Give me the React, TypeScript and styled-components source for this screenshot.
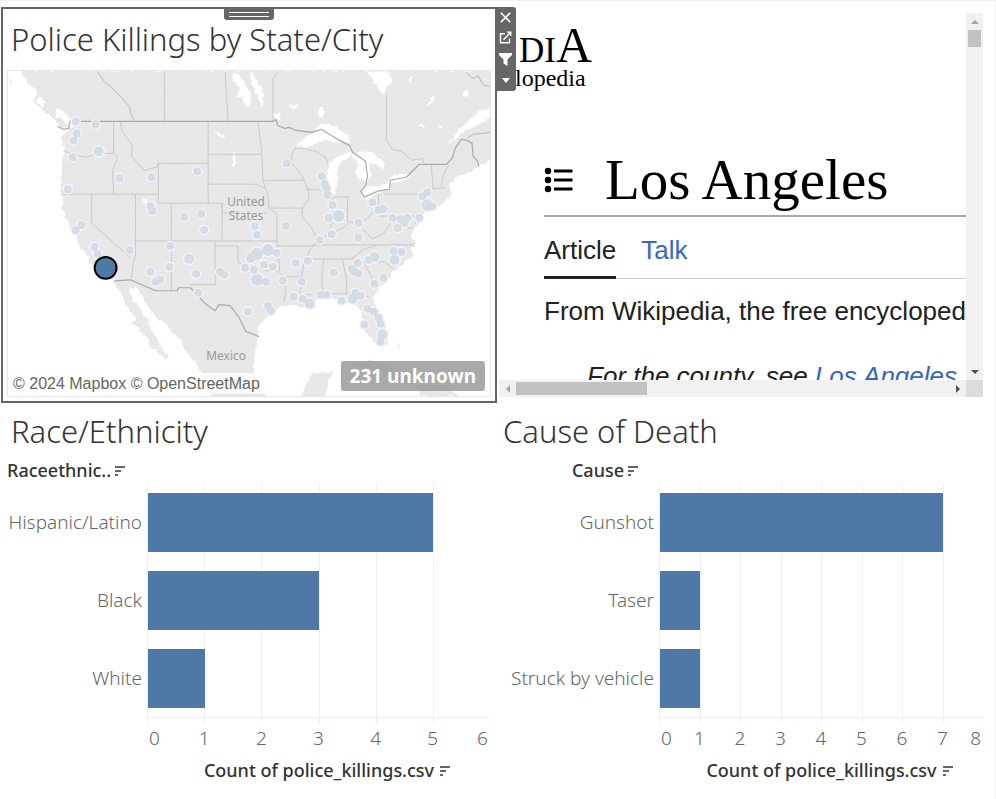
import React from "react";
import styled, { createGlobalStyle } from "styled-components";

const GlobalStyle = createGlobalStyle`
  * { box-sizing: border-box; }
  body { margin: 0; background: #fff; }
  button { border: 0; padding: 0; background: none; font: inherit; color: inherit; }
`;

const sans = `"Noto Sans", "Open Sans", sans-serif`;

const Dashboard = styled.main`
  min-height: 100vh;
  border-top: 1px solid #f1f1f1;
  border-right: 1px solid #f1f1f1;
  display: grid;
  grid-template-columns: minmax(0, 1fr) minmax(0, 1fr);
  grid-template-rows: auto 1fr;
  column-gap: 1px;
  font-family: ${sans};
  color: #333;
`;

const Title = styled.h2`
  margin: 0;
  font-size: 31px;
  line-height: 40px;
  font-weight: 300;
  color: #333;
  white-space: nowrap;
`;

/* ---------- map zone ---------- */

const MapZone = styled.section`
  position: relative;
  margin: 6px 0 0 1px;
  border: 2px solid #666;
  padding: 0 4px 4px;
`;

const MapTitle = styled(Title)`
  padding: 10px 0 11px 4px;
`;

const DragHandle = styled.button`
  position: absolute;
  top: -2px;
  left: 50%;
  margin-left: -25px;
  width: 50px;
  height: 13px;
  padding: 5px 5px 3px;
  border-radius: 0 0 3px 3px;
  background: #666;
  display: flex;
  flex-direction: column;
  justify-content: space-between;
`;

const Grip = styled.span`
  width: 100%;
  height: 1px;
  background: #fff;
`;

const ZoneToolbar = styled.div`
  position: absolute;
  z-index: 2;
  top: -2px;
  left: 100%;
  width: 21px;
  height: 84px;
  border-radius: 0 3px 3px 0;
  background: #666;
  display: grid;
  grid-template-rows: 20px 20px 24px 18px;
  place-items: center;
`;

const ToolButton = styled.button`
  display: grid;
  place-items: center;
  color: #fff;
`;

const MapFrame = styled.div`
  position: relative;
  border: 1px solid #e6e6e6;
  aspect-ratio: 484 / 327;
  overflow: hidden;

  > svg { display: block; width: 100%; height: 100%; }
`;

const Attribution = styled.div`
  position: absolute;
  left: 2px;
  bottom: 2px;
  padding: 0 3px;
  background: rgba(255, 255, 255, 0.75);
  font: 16px/21px "Liberation Sans", Arial, sans-serif;
  color: #666;
`;

const UnknownBadge = styled.button`
  position: absolute;
  right: 5px;
  bottom: 5px;
  padding: 0 9px;
  border-radius: 3px;
  background: rgba(150, 150, 150, 0.82);
  color: #fff;
  font: 700 19px/30px ${sans};
`;

const LAND =
  "M19 70 L25 77 L28 84 L34 88 L36 94 L32 101 L38 106 L46 113 L53 118 L57 124 L60 127 L68 128 L61 137 L63 148 L62 156 L60 176 L60 190 L62 200 L61 209 L66 219 L69 228 L77 239 L79 247 L87 256 L89 263 L100 267 L108 276 L113 281 L116 287 L122 295 L124 303 L131 312 L136 321 L130 323 L138 328 L141 334 L147 337 L149 346 L157 352 L165 360 L169 357 L161 349 L157 339 L150 330 L148 320 L142 315 L140 309 L132 300 L129 289 L135 287 L141 293 L144 301 L149 308 L156 319 L165 323 L173 334 L180 340 L182 347 L190 358 L196 363 L200 372 L204 382 L212 398 L270 398 L262 393 L256 386 L254 375 L254 358 L257 343 L258 328 L265 319 L272 312 L282 307 L292 305 L299 307 L307 308 L312 310 L316 307 L313 301 L322 299 L335 299 L345 303 L353 304 L360 309 L363 315 L364 326 L369 335 L375 343 L381 347 L388 345 L388 334 L386 323 L381 314 L374 303 L374 296 L381 288 L389 280 L394 272 L405 262 L414 256 L411 250 L416 244 L412 235 L415 229 L420 224 L422 216 L428 211 L439 207 L447 200 L452 196 L451 185 L457 178 L463 175 L470 172 L479 166 L492 160 L492 70 Z";

const WATER = [
  "M57 107 L65 113 L70 119 L71 127 L67 126 L63 119 L55 115 Z",
  "M38 96 L44 102 L42 106 L35 101 Z",
  "M297 145 L303 138 L313 133 L321 123 L332 124 L339 128 L348 134 L350 143 L341 141 L333 143 L326 139 L318 141 L311 146 L303 147 Z",
  "M328 170 L331 161 L338 156 L350 152 L354 154 L344 160 L338 168 L338 181 L335 194 L330 193 L328 181 Z",
  "M353 154 L363 151 L373 152 L380 158 L385 164 L384 169 L377 164 L370 163 L371 174 L368 182 L361 178 L360 181 L356 171 L360 164 L354 158 Z",
  "M361 195 L366 186 L379 186 L392 181 L391 189 L379 192 L367 200 Z",
  "M389 180 L394 175 L408 173 L411 177 L403 181 L392 183 Z",
  "M232 72 L239 73 L244 83 L250 92 L251 103 L246 107 L243 97 L237 96 L239 87 L232 78 Z",
  "M250 71 L255 76 L260 86 L264 94 L263 105 L260 103 L258 94 L251 84 Z",
  "M367 71 L389 71 L394 80 L388 86 L384 95 L380 90 L376 82 Z",
  "M408 78 L414 76 L411 82 Z",
  "M427 104 L432 98 L436 94 L434 101 L429 105 Z",
  "M463 92 L470 88 L468 96 L464 97 Z",
  "M317 111 L322 106 L325 112 L322 117 L317 115 Z",
  "M273 113 L280 112 L281 119 L275 121 Z",
  "M288 103 L292 106 L299 103 L296 108 L290 108 Z",
  "M417 126 L422 123 L427 127 Z",
  "M439 124 L444 126 L441 128 Z",
  "M450 143 L457 132 L469 121 L479 112 L492 105 L492 117 L483 122 L472 128 L462 133 L454 141 Z",
  "M213 130 L220 133 L226 137 L222 138 Z",
  "M233 151 L236 156 L235 165 L232 167 Z",
  "M141 198 L149 200 L150 206 L144 203 Z",
];

const ISLANDS = [
  "M302 398 L308 382 L312 374 L333 372 L329 380 L326 398 Z",
  "M350 366 L370 360 L385 364 L400 374 L416 382 L404 386 L390 379 L374 369 L356 368 Z",
  "M420 389 L446 386 L460 397 L420 397 Z",
  "M397 344 L400 346 L399 351 Z",
  "M8 74 L12 84 L9 82 Z",
];

const STATES =
  "M164 71V121 M225 71L228 121 M113 121V153 M61 194H158 M64 151L75 155L85 157L100 153H113L117 157L112 170L113 194 M120 121L121 130L132 145L131 156L144 170L156 167L158 163 M158 163H208 M158 163V203 M158 203H222V241 M208 121V203 M208 154H262 M208 184H256L266 188 M91 194V223L130 258 M135 194V256L133 262L131 279 M171 203V291 M135 241H277 M215 241V285H189 M215 246H238V262L247 268L262 270L278 272 M223 213H268 M222 213V203 M277 214V241L280 272 M268 208H302 M258 121L262 153L263 180L268 195L269 208L277 214 M263 180H305 M292 155L295 148 M292 155L291 162L302 175L309 190L309 198L303 208L302 216L312 228L318 240 M313 245H415 M277 246H314 M306 259H356 M283 277H303 M279 272L283 277L286 290L284 302 M318 240L310 250L304 264L302 276L300 295H313 M324 260L322 280L324 298 M324 294H347 M343 260L347 280L347 294L370 297 M356 259L364 262L371 275L378 287 M352 259L363 250L378 245 M378 262H386L395 270 M306 189L325 190 M328 197H350 M333 197V222L328 235 M348 197V222 M316 240L326 236L333 233L343 228L350 222L361 224L372 214L379 205V194 M385 194H425 M379 216H416 M363 229L373 239L384 234L394 219 M425 194L430 204L426 211 M432 164L434 190 M450 164L444 175L442 187 M434 188H446 M295 148L305 148L318 152L326 157L328 164 M387 93V140L393 149L402 151L412 160L424 158V163 M273 121V78L279 71 M416 216V224 M393 216L408 228L414 228";

const PROVINCE =
  "M97 71L103 80L112 88L121 97L129 106L131 115L134 120 M467 72L474 78L479 75L484 84L491 86 M468 138L474 134L491 132";

const NATION =
  "M57 126L63 129L68 128L69 121H273L276 119L278 125L285 128L290 127L296 130L312 132L322 129L340 140L350 145L353 152L366 161L368 176L366 186L361 191L365 197L378 191L390 189L391 180L407 177L420 164H447L453 158L456 148L462 139L468 140L473 143L474 156L478 160L480 166 M114 281L130 280L155 291H177L178 288H190L198 296L204 303L215 311L219 305L230 306L239 318L246 332L259 337";

/* [x, y, radius] */
const DOTS: [number, number, number?][] = [
  [75, 121], [95, 124], [76, 133], [73, 140], [98, 151, 5], [72, 157], [67, 189], [119, 178], [151, 177], [197, 171],
  [150, 206], [152, 211], [184, 217], [201, 214], [204, 230], [81, 225], [75, 230], [94, 247], [97, 254], [129, 250],
  [170, 246], [189, 259, 5], [150, 272], [155, 282], [160, 280], [169, 267], [196, 274], [220, 272], [224, 275],
  [245, 268], [198, 293], [248, 312], [112, 275], [287, 163], [322, 176], [325, 184], [327, 188], [328, 195],
  [428, 192], [423, 196], [333, 205], [339, 216, 6], [329, 218], [373, 202], [379, 210], [384, 209], [428, 205, 6],
  [433, 206], [393, 218], [401, 219], [405, 223], [408, 218], [398, 228], [420, 218], [359, 223], [332, 234],
  [359, 238], [320, 240], [286, 226], [255, 226], [257, 235], [251, 258, 5], [257, 254, 6], [268, 250, 6], [277, 253],
  [264, 265], [273, 267], [254, 270], [257, 280, 6], [266, 282], [283, 281], [296, 263], [308, 261], [334, 273],
  [302, 282], [394, 251], [402, 252], [375, 257, 5], [369, 260], [395, 260, 5], [358, 263], [352, 269], [355, 272],
  [359, 274], [375, 284], [384, 278], [294, 297], [303, 299], [310, 304, 5], [321, 295], [327, 295], [342, 301],
  [353, 299, 5], [356, 293], [361, 296], [268, 306], [271, 311], [368, 309], [374, 312], [379, 318], [381, 324],
  [365, 325], [383, 335, 5], [381, 342],
];

function UsMap() {
  return (
    <svg viewBox="7 70 484 327" preserveAspectRatio="xMidYMid slice" role="img" aria-label="Map of police killings">
      <defs>
        <filter id="coast" x="0" y="0" width="100%" height="100%">
          <feTurbulence type="fractalNoise" baseFrequency="0.2" numOctaves="2" seed="4" />
          <feDisplacementMap in="SourceGraphic" scale="5" xChannelSelector="R" yChannelSelector="G" />
        </filter>
        <filter id="relief" x="0" y="0" width="100%" height="100%">
          <feTurbulence type="fractalNoise" baseFrequency="0.05" numOctaves="3" seed="8" />
          <feColorMatrix values="0 0 0 0 .78  0 0 0 0 .78  0 0 0 0 .78  0.5 0 0 0 -.16" />
          <feComposite in2="SourceGraphic" operator="in" />
        </filter>
      </defs>
      <rect x="7" y="70" width="484" height="327" fill="#fff" />
      <g filter="url(#coast)">
        <path d={LAND} fill="#e8e8e8" />
        <path d={LAND} fill="#e8e8e8" filter="url(#relief)" />
        <path d={ISLANDS.join(" ")} fill="#e8e8e8" />
        <path d={WATER.join(" ")} fill="#fff" />
      </g>
      <g fill="none" strokeLinejoin="round">
        <path d={STATES} stroke="#c2c2c2" strokeWidth="0.8" />
        <path d={PROVINCE} stroke="#b4b4b4" strokeWidth="0.9" />
        <path d={NATION} stroke="#aaa" strokeWidth="1.2" />
      </g>
      <g fill="#999" fontFamily={sans} fontSize="12" textAnchor="middle" stroke="#e8e8e8" strokeWidth="2" paintOrder="stroke">
        <text x="246" y="206">United</text>
        <text x="246" y="220">States</text>
        <text x="226" y="361">Mexico</text>
      </g>
      <g fill="#f3f4f5">
        {DOTS.map(([x, y, r = 4], i) => <circle key={i} cx={x} cy={y} r={r + 1.4} />)}
      </g>
      <g fill="#d4dde5">
        {DOTS.map(([x, y, r = 4], i) => <circle key={i} cx={x} cy={y} r={r} />)}
      </g>
      <circle cx="105" cy="268" r="11" fill="#4e79a7" stroke="#000" strokeWidth="2" />
    </svg>
  );
}

/* ---------- web page zone ---------- */

const WebZone = styled.section`
  margin: 12px 12px 6px 1px;
  display: grid;
  grid-template-columns: minmax(0, 1fr) 17px;
  grid-template-rows: minmax(0, 1fr) 17px;
`;

const WebPage = styled.article`
  contain: size;
  overflow: hidden;
  padding: 12px 0 0 20px;
  font-family: "Liberation Sans", Arial, sans-serif;
  font-size: 26px;
  line-height: 34px;
  color: #202122;
  white-space: nowrap;
`;

const Wordmark = styled.div`
  height: 40px;
  font-family: "Liberation Serif", "Times New Roman", serif;
  font-size: 35px;
  line-height: 40px;
  color: #000;
`;

const BigCap = styled.span`
  font-size: 50px;
`;

const Tagline = styled.div`
  margin-left: -4px;
  font: 24px/26px "Liberation Serif", "Times New Roman", serif;
  color: #000;
`;

const PageBody = styled.div`
  margin-left: 25px;
`;

const PageHeading = styled.header`
  margin-top: 57px;
  padding-bottom: 3px;
  border-bottom: 2px solid #a2a9b1;
  display: flex;
  align-items: center;
  gap: 31px;
`;

const PageTitle = styled.h1`
  margin: 0;
  font: 400 57px/64px "Liberation Serif", "Times New Roman", serif;
  color: #000;
`;

const Tabs = styled.nav`
  display: flex;
  gap: 25px;
  border-bottom: 1px solid #c8ccd1;
`;

const Tab = styled.a<{ $active?: boolean }>`
  padding: 16px 0 9px;
  margin-bottom: -1px;
  border-bottom: 3px solid ${(p) => (p.$active ? "#202122" : "transparent")};
  color: ${(p) => (p.$active ? "#202122" : "#3366cc")};
  text-decoration: none;
`;

const Tagged = styled.p`
  margin: 15px 0 0;
`;

const HatNote = styled.p`
  margin: 31px 0 0 43px;
  font-style: italic;

  a { color: #3366cc; text-decoration: none; }
`;

const ScrollBar = styled.div<{ $vertical?: boolean }>`
  background: #f1f1f1;
  display: flex;
  flex-direction: ${(p) => (p.$vertical ? "column" : "row")};
  align-items: center;
`;

const ScrollArrow = styled.button`
  width: 17px;
  height: 17px;
  flex: none;
  display: grid;
  place-items: center;
`;

const Thumb = styled.div<{ $vertical?: boolean }>`
  background: #c1c1c1;
  width: ${(p) => (p.$vertical ? "13px" : "28%")};
  height: ${(p) => (p.$vertical ? "17px" : "13px")};
`;

const Spacer = styled.div`
  flex: 1;
`;

const ScrollCorner = styled.div`
  background: #dcdcdc;
`;

function Arrow({ d, color, label }: { d: string; color: string; label: string }) {
  return (
    <ScrollArrow type="button" aria-label={label}>
      <svg width="8" height="8" viewBox="0 0 8 8"><path d={d} fill={color} /></svg>
    </ScrollArrow>
  );
}

/* ---------- bar charts ---------- */

const ChartZone = styled.section<{ $start: number; $end: number }>`
  padding: 8px ${(p) => p.$end}px 0 ${(p) => p.$start}px;
`;

const ChartTitle = styled(Title)`
  padding-left: 4px;
`;

const ChartGrid = styled.div<{ $labels: number }>`
  display: grid;
  grid-template-columns: ${(p) => p.$labels}px minmax(0, 1fr);
  margin-top: 6px;
`;

const FieldHeader = styled.div<{ $align: string }>`
  grid-column: 1;
  grid-row: 1;
  height: 26px;
  display: flex;
  align-items: center;
  justify-content: ${(p) => p.$align};
  gap: 4px;
  padding-right: ${(p) => (p.$align === "flex-end" ? 20 : 0)}px;
  font-size: 18px;
  line-height: 26px;
  font-weight: 500;
  white-space: nowrap;
`;

const RowLabels = styled.div`
  grid-column: 1;
  grid-row: 2;
  display: grid;
  grid-auto-rows: 78px;
  align-items: center;
  justify-items: end;
  padding-right: 5px;
  font-size: 19px;
  line-height: 24px;
  font-weight: 300;
  color: #666;
  white-space: nowrap;
`;

const GridLines = styled.div`
  grid-column: 2;
  grid-row: 2 / 4;
  display: flex;
`;

const GridLine = styled.span`
  flex: 1;
  border-left: 1px solid #f0f0f0;
`;

const Bars = styled.div`
  grid-column: 2;
  grid-row: 2;
  display: grid;
  grid-auto-rows: 78px;
  align-items: center;
  border-bottom: 1px solid #f0f0f0;
  padding-left: 1px;
`;

const Bar = styled.div`
  height: 59px;
  background: #4e79a7;
`;

const TickStubs = styled.div`
  grid-column: 2;
  grid-row: 3;
  height: 5px;
`;

const Axis = styled.div`
  grid-column: 2;
  grid-row: 4;
  display: flex;
  justify-content: space-between;
  padding-top: 2px;
  font-size: 19px;
  line-height: 26px;
  font-weight: 300;
  color: #666;
`;

const Tick = styled.span<{ $edge?: string }>`
  width: 0;
  display: flex;
  justify-content: ${(p) => p.$edge ?? "center"};
`;

const TickLabel = styled.span`
  padding: 0 2px;
`;

const AxisTitle = styled.div`
  grid-column: 2;
  grid-row: 5;
  display: flex;
  align-items: center;
  justify-content: center;
  gap: 6px;
  margin-top: 6px;
  padding-left: 18px;
  font-size: 18px;
  line-height: 26px;
  font-weight: 500;
  white-space: nowrap;
`;

const SortButton = styled.button`
  display: grid;
`;

function SortIcon() {
  return (
    <SortButton type="button" aria-label="Sort">
      <svg width="11" height="11" viewBox="0 0 11 11" fill="#666">
        <path d="M0 1h10v2H0zM0 5h6v2H0zM0 9h3v2H0z" />
      </svg>
    </SortButton>
  );
}

type ChartProps = {
  title: string;
  field: string;
  align: string;
  labels: number;
  start: number;
  end: number;
  max: number;
  data: [string, number][];
};

function BarChart({ title, field, align, labels, start, end, max, data }: ChartProps) {
  const ticks = Array.from({ length: max + 1 }, (_, i) => i);
  return (
    <ChartZone $start={start} $end={end}>
      <ChartTitle>{title}</ChartTitle>
      <ChartGrid $labels={labels}>
        <FieldHeader $align={align}>{field}<SortIcon /></FieldHeader>
        <RowLabels>{data.map(([name]) => <span key={name}>{name}</span>)}</RowLabels>
        <GridLines>{ticks.slice(1).map((t) => <GridLine key={t} />)}</GridLines>
        <Bars>
          {data.map(([name, value]) => (
            <Bar key={name} style={{ width: `${(value / max) * 100}%` }} />
          ))}
        </Bars>
        <TickStubs />
        <Axis>
          {ticks.map((t) => (
            <Tick key={t} $edge={t === 0 ? "flex-start" : t === max ? "flex-end" : undefined}>
              <TickLabel>{t}</TickLabel>
            </Tick>
          ))}
        </Axis>
        <AxisTitle>Count of police_killings.csv<SortIcon /></AxisTitle>
      </ChartGrid>
    </ChartZone>
  );
}

export default function App() {
  return (
    <>
      <GlobalStyle />
      <Dashboard>
        <MapZone>
          <DragHandle type="button" aria-label="Move"><Grip /><Grip /></DragHandle>
          <MapTitle>Police Killings by State/City</MapTitle>
          <MapFrame>
            <UsMap />
            <Attribution>© 2024 Mapbox © OpenStreetMap</Attribution>
            <UnknownBadge type="button">231 unknown</UnknownBadge>
          </MapFrame>
          <ZoneToolbar>
            <ToolButton type="button" aria-label="Remove">
              <svg width="11" height="11" viewBox="0 0 11 11" stroke="#fff" strokeWidth="1.6"><path d="M.8.8l9.4 9.4M10.2.8L.8 10.2" /></svg>
            </ToolButton>
            <ToolButton type="button" aria-label="Go to sheet">
              <svg width="13" height="13" viewBox="0 0 13 13" fill="none" stroke="#fff" strokeWidth="1.4">
                <path d="M6 2.7H1.5v9h9V7.5M4.5 8.7L10.5 2.5" /><path d="M7.5 .5H12.500V5.500Z" fill="#fff" stroke="none" />
              </svg>
            </ToolButton>
            <ToolButton type="button" aria-label="Use as filter">
              <svg width="13" height="14" viewBox="0 0 13 14" fill="#fff"><path d="M0 1h13v2L8.500 7.500V14L4.500 11.500V7.500L0 3z" /></svg>
            </ToolButton>
            <ToolButton type="button" aria-label="More options">
              <svg width="8" height="5" viewBox="0 0 8 5" fill="#fff"><path d="M0 0h8L4 5z" /></svg>
            </ToolButton>
          </ZoneToolbar>
        </MapZone>

        <WebZone>
          <WebPage>
            <Wordmark>DI<BigCap>A</BigCap></Wordmark>
            <Tagline>lopedia</Tagline>
            <PageBody>
              <PageHeading>
                <svg width="30" height="26" viewBox="0 0 30 26">
                  <g fill="#000">
                    <circle cx="4" cy="4" r="3.200" /><circle cx="4" cy="13" r="3.200" /><circle cx="4" cy="22" r="3.200" />
                    <path d="M10 2.500h18.500v3H10zM10 11.500h18.500v3H10zM10 20.500h18.500v3H10z" />
                  </g>
                </svg>
                <PageTitle>Los Angeles</PageTitle>
              </PageHeading>
              <Tabs>
                <Tab href="#article" $active>Article</Tab>
                <Tab href="#talk">Talk</Tab>
              </Tabs>
              <Tagged>From Wikipedia, the free encyclopedia</Tagged>
              <HatNote>For the county, see <a href="#county">Los Angeles</a></HatNote>
            </PageBody>
          </WebPage>
          <ScrollBar $vertical>
            <Arrow label="Scroll up" color="#a3a3a3" d="M4 2l4 4H0z" />
            <Thumb $vertical />
            <Spacer />
            <Arrow label="Scroll down" color="#505050" d="M0 2h8L4 6z" />
          </ScrollBar>
          <ScrollBar>
            <Arrow label="Scroll left" color="#a3a3a3" d="M6 0v8L2 4z" />
            <Thumb />
            <Spacer />
            <Arrow label="Scroll right" color="#505050" d="M2 0l4 4-4 4z" />
          </ScrollBar>
          <ScrollCorner />
        </WebZone>

        <BarChart
          title="Race/Ethnicity" field="Raceethnic.." align="flex-start"
          labels={140} start={7} end={7} max={6}
          data={[["Hispanic/Latino", 5], ["Black", 3], ["White", 1]]}
        />
        <BarChart
          title="Cause of Death" field="Cause" align="flex-end"
          labels={160} start={1} end={12} max={8}
          data={[["Gunshot", 7], ["Taser", 1], ["Struck by vehicle", 1]]}
        />
      </Dashboard>
    </>
  );
}
